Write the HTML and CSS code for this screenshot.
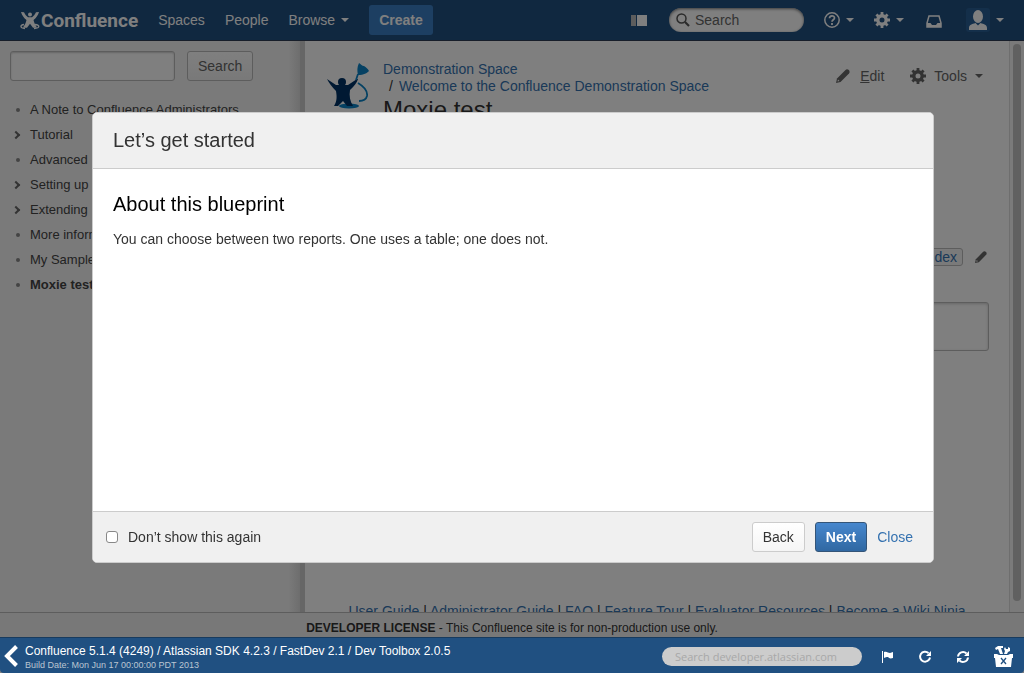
FILE: index.html
```
<!DOCTYPE html>
<html lang="en">
<head>
  <meta charset="UTF-8">
  <meta name="viewport" content="width=device-width, initial-scale=1">
  <title>Moxie test - Confluence</title>
  <link rel="stylesheet" href="styles.css">
</head>
<body>
  <div class="page">
    <header class="header">
      <a class="logo" href="#">
        <svg width="20" height="20" viewBox="0 0 20 20" fill="#fff">
          <circle cx="10" cy="4.500" r="2"/>
          <path d="M1 2l3 .3c1 2 2.500 4 4 5h4c1.500-1 3-3 4-5l3-.3c-1 3.500-3 6-5.500 8 .5 3 2 5 3.500 7.700h-4l-3-4-3 4H3c1.500-2.700 3-4.700 3.500-7.700C4 8 2 5.500 1 2z"/>
          <path d="M4 14.500c-4 .5-4.500 3.500 1 4M15 14.500c5 .5 5.500 3.500-1 4" fill="none" stroke="#fff" stroke-width="1.300"/>
        </svg>
        <span>Confluence</span>
      </a>
      <nav class="nav">
        <a href="#">Spaces</a>
        <a href="#">People</a>
        <a href="#" class="drop">Browse</a>
      </nav>
      <button class="create">Create</button>
      <div class="header-right">
        <a href="#" class="icon sidebar-icon" aria-label="Sidebar">
          <svg width="16" height="11" viewBox="0 0 16 11"><path d="M0 0h5v11H0z" fill="#bbb"/><path d="M6 0h10v11H6z" fill="#fff"/></svg>
        </a>
        <div class="quick-search">
          <svg width="14" height="14" viewBox="0 0 14 14" fill="none" stroke="#555"><circle cx="5.500" cy="5.500" r="4.500" stroke-width="1.500"/><path d="M9 9l4 4" stroke-width="2.200"/></svg>
          <input type="text" placeholder="Search" aria-label="Quick search">
        </div>
        <a href="#" class="icon drop help" aria-label="Help">
          <svg width="16" height="16" viewBox="0 0 16 16" fill="none" stroke="#fff"><circle cx="8" cy="8" r="7.200" stroke-width="1.500"/><path d="M5.500 6.300C5.500 3 10.500 3 10.500 6c0 1.800-2.500 1.800-2.500 3.800" stroke-width="1.700"/><path d="M8 11v2" stroke-width="1.800"/></svg>
        </a>
        <a href="#" class="icon drop admin" aria-label="Administration">
          <svg width="16" height="16" viewBox="0 0 16 16" fill="none" stroke="#fff"><circle cx="8" cy="8" r="4.200" stroke-width="3.400"/><path d="M8 0v4M8 12v4M0 8h4M12 8h4M2.400 2.400l2.600 2.600M11 11l2.600 2.600M2.400 13.600L5 11M11 5l2.600-2.600" stroke-width="2.800"/></svg>
        </a>
        <a href="#" class="icon tray" aria-label="Workbox">
          <svg width="16" height="13" viewBox="0 0 16 13"><path d="M3 1h10l2 7v4H1V8z" fill="none" stroke="#fff" stroke-width="1.500"/><path d="M1 8h3.500l1.500 2h4l1.500-2H15v4H1z" fill="#fff"/></svg>
        </a>
        <a href="#" class="icon drop user" aria-label="User">
          <svg width="24" height="24" viewBox="0 0 24 24"><rect width="24" height="24" rx="3" fill="#285f95"/><ellipse cx="12" cy="8.500" rx="5" ry="6.500" fill="#fff"/><path d="M3 22v-2c0-3 3-4 6.500-5l2.500 2.500 2.500-2.500c3.500 1 6.500 2 6.500 5v2z" fill="#fff"/></svg>
        </a>
      </div>
    </header>

    <div class="main">
      <aside class="sidebar">
        <form class="side-search">
          <input type="text" aria-label="Search this space">
          <button type="button">Search</button>
        </form>
        <ul class="tree">
          <li>A Note to Confluence Administrators</li>
          <li class="closed">Tutorial</li>
          <li>Advanced</li>
          <li class="closed">Setting up</li>
          <li class="closed">Extending</li>
          <li>More information</li>
          <li>My Sample</li>
          <li class="current">Moxie test</li>
        </ul>
      </aside>
      <div class="splitter"></div>
      <div class="content">
        <div class="title-row">
          <svg class="space-logo" width="42" height="48" viewBox="0 0 42 48">
            <ellipse cx="22" cy="43" rx="10" ry="2.500" fill="#0a83c6"/>
            <circle cx="15" cy="19" r="4" fill="#003366"/>
            <path d="M0 16l9 6h12l9-6h1c-1 4-4 7-8 11-1 6 0 11 3 16h-6l-4-5-5 5H7c3-5 3-9 2-15C5 24 2 20 0 16z" fill="#003366"/>
            <path d="M32 0c2 1 3 3 5 3 2 1 4 3 5 5-2 2-5 4-11 4-1-4-1-8 1-12z" fill="#0a83c6"/>
            <path d="M31 11l-2 6M31 20c5 3 10 7 9 13-1 4-4 5-8 5" fill="none" stroke="#0a83c6" stroke-width="1.800"/>
          </svg>
          <div class="title-text">
            <ul class="crumbs">
              <li><a href="#">Demonstration Space</a></li>
              <li class="sub"><a href="#">Welcome to the Confluence Demonstration Space</a></li>
            </ul>
            <h1>Moxie test</h1>
          </div>
          <div class="actions">
            <a href="#">
              <svg class="pencil" width="14" height="14" viewBox="0 0 14 14" fill="#666"><path d="M0 14l1-4.500L9.500 1c2-2 5.500 1 3.500 3.500L4.500 13z"/><path d="M1.500 12.500l.5-2 1.500 1.500z" fill="#fff"/></svg>
              <span><u>E</u>dit</span>
            </a>
            <a href="#" class="drop">
              <svg width="16" height="16" viewBox="0 0 16 16" fill="none" stroke="#666"><circle cx="8" cy="8" r="4.200" stroke-width="3.400"/><path d="M8 0v4M8 12v4M0 8h4M12 8h4M2.400 2.400l2.600 2.600M11 11l2.600 2.600M2.400 13.600L5 11M11 5l2.600-2.600" stroke-width="2.800"/></svg>
              <span>Tools</span>
            </a>
          </div>
        </div>
        <div class="labels">
          <a href="#" class="label">index</a>
          <a href="#" class="edit-labels" aria-label="Edit labels">
            <svg width="12" height="12" viewBox="0 0 14 14" fill="#666"><path d="M0 14l1-4.500L9.500 1c2-2 5.500 1 3.500 3.500L4.500 13z"/><path d="M1.500 12.500l.5-2 1.500 1.500z" fill="#fff"/></svg>
          </a>
        </div>
        <textarea class="comment" aria-label="Write a comment"></textarea>
        <div class="footer-links">
          <a href="#">User Guide</a> | <a href="#">Administrator Guide</a> | <a href="#">FAQ</a> | <a href="#">Feature Tour</a> | <a href="#">Evaluator Resources</a> | <a href="#">Become a Wiki Ninja</a>
        </div>
      </div>
      <div class="scrollbar"><div class="thumb"></div></div>
    </div>

    <div class="license"><strong>DEVELOPER LICENSE</strong> - This Confluence site is for non-production use only.</div>
    <div class="blanket"></div>
  </div>

  <div class="toolbar">
    <button class="collapse" aria-label="Collapse">
      <svg width="14" height="22" viewBox="0 0 14 22" fill="none" stroke="#fff" stroke-width="4"><path d="M12.500 1.500L3 11l9.500 9.500"/></svg>
    </button>
    <div class="versions">
      <div class="version">Confluence 5.1.4 (4249) / Atlassian SDK 4.2.3 / FastDev 2.1 / Dev Toolbox 2.0.5</div>
      <div class="build">Build Date: Mon Jun 17 00:00:00 PDT 2013</div>
    </div>
    <div class="tools">
      <input class="dev-search" type="text" placeholder="Search developer.atlassian.com" aria-label="Search developer.atlassian.com">
      <button aria-label="Flag"><svg width="12" height="12" viewBox="0 0 12 12" fill="#fff"><path d="M0 0h1v12H0zM2 1c3-1 4 1 6 1l3-1v6c-3 1-4 0-5-1-2 0-2 0-4 1z"/></svg></button>
      <button aria-label="Reload"><svg width="14" height="14" viewBox="0 0 14 14"><path d="M10.500 3A5 5 0 1 0 12 7.500" fill="none" stroke="#fff" stroke-width="2"/><path d="M13 1v5H8z" fill="#fff"/></svg></button>
      <button aria-label="Live reload"><svg width="14" height="14" viewBox="0 0 14 14"><path d="M2 6.500a5 5 0 0 1 8.500-3M12 7.500a5 5 0 0 1-8.500 3" fill="none" stroke="#fff" stroke-width="2"/><path d="M13 1v5H8zM1 13V8h5z" fill="#fff"/></svg></button>
      <button class="toolbox" aria-label="Toolbox"><svg width="19" height="21" viewBox="0 0 19 21"><path d="M1 2l3-2h5v2H7l2 6H6L4 3 2 4zM11 1l1 2h2V1l2 1v3l-2 1-1 2h-3l1-3-1-2z" fill="#fff"/><path d="M0 8h3l2 1h9l2-1h3v4h-1l-1 9H2l-1-9H0z" fill="#fff"/><path d="M7 12l5 6M12 12l-5 6" stroke="#205081" stroke-width="1.300"/></svg></button>
    </div>
  </div>

  <div class="dialog-wrap">
    <section class="dialog" role="dialog" aria-labelledby="dialog-title">
      <h2 id="dialog-title" class="dialog-header">Let’s get started</h2>
      <div class="dialog-body">
        <h3>About this blueprint</h3>
        <p>You can choose between two reports. One uses a table; one does not.</p>
      </div>
      <div class="dialog-footer">
        <input type="checkbox" id="dont-show">
        <label for="dont-show">Don’t show this again</label>
        <div class="dialog-buttons">
          <button class="back">Back</button>
          <button class="next">Next</button>
          <a href="#">Close</a>
        </div>
      </div>
    </section>
  </div>
</body>
</html>
```
FILE: styles.css
```
*, *::before {
  box-sizing: border-box;
}
body {
  margin: 0;
  height: 100vh;
  display: flex;
  flex-direction: column;
  background: #808080;
  color: #333;
  font-family: "Liberation Sans", Arial, sans-serif;
  font-size: 14px;
}
a {
  color: #3572b0;
  text-decoration: none;
}
button, input, textarea {
  font-family: inherit;
  font-size: 14px;
}
svg {
  display: block;
  flex: none;
}
.page {
  position: relative;
  flex: 1;
  min-height: 0;
  display: flex;
  flex-direction: column;
}
.blanket {
  position: absolute;
  inset: 0;
  background: rgba(0, 0, 0, 0.5);
}
.drop::after {
  content: "";
  border: 4px solid transparent;
  border-top-color: currentColor;
  border-bottom: none;
}

/* header */
.header {
  height: 41px;
  flex: none;
  display: flex;
  align-items: center;
  padding: 0 20px;
  background: #205081;
  border-bottom: 1px solid #2e3d54;
}
.header a {
  color: #fff;
}
.logo {
  display: flex;
  align-items: center;
  gap: 1px;
  font-family: Roboto, sans-serif;
  font-size: 19px;
  font-weight: bold;
}
.nav {
  display: flex;
  gap: 20px;
  margin-left: 20px;
}
.nav a, .icon {
  display: flex;
  align-items: center;
  gap: 6px;
}
.create {
  height: 30px;
  margin-left: 20px;
  padding: 0 10px;
  border: none;
  border-radius: 3px;
  background: #3b7fc4;
  color: #fff;
  font-weight: bold;
}
.header-right {
  display: flex;
  align-items: center;
  gap: 20px;
  margin-left: auto;
}
.quick-search {
  display: flex;
  align-items: center;
  gap: 5px;
  width: 135px;
  height: 24px;
  padding: 0 7px;
  border-radius: 12px;
  background: #fff;
  box-shadow: inset 0 1px 3px #777;
}
.quick-search input {
  width: 90px;
  padding: 0;
  border: none;
  background: none;
}
.quick-search input::placeholder {
  color: #666;
}
.sidebar-icon {
  margin-right: 2px;
}
.tray {
  padding: 2px 0 0 2px;
}
.user {
  margin-left: 4px;
}

/* page columns */
.main {
  flex: 1;
  min-height: 0;
  display: flex;
  background: #fff;
}
.sidebar {
  width: 300px;
  flex: none;
  padding: 10px;
  overflow: hidden;
  background: linear-gradient(to right, #f5f5f5 288px, #dcdcdc);
}
.splitter {
  width: 5px;
  flex: none;
  background: #ccc;
}
.side-search {
  display: flex;
  gap: 12px;
}
.side-search input {
  width: 165px;
  height: 30px;
  border: 1px solid #bbb;
  border-radius: 3px;
  box-shadow: inset 0 1px 2px #ccc;
}
.side-search button {
  height: 30px;
  padding: 0 10px;
  border: 1px solid #bbb;
  border-radius: 3px;
  background: linear-gradient(#fff, #f2f2f2);
  color: #666;
}
.tree {
  margin: 16px 0 0;
  padding: 0;
  list-style: none;
  color: #444;
  font-size: 13px;
  line-height: 25px;
  white-space: nowrap;
}
.tree li {
  display: flex;
  align-items: center;
}
.tree li::before {
  content: "";
  width: 4px;
  height: 4px;
  margin: 0 10px 0 6px;
  border-radius: 50%;
  background: #888;
}
.tree .closed::before {
  width: 6px;
  height: 6px;
  margin: 0 11px 0 3px;
  border: solid #666;
  border-width: 2px 2px 0 0;
  border-radius: 0;
  background: none;
  transform: rotate(45deg);
}
.tree .current {
  font-weight: bold;
}

/* page content */
.content {
  flex: 1;
  min-width: 0;
  padding: 20px 20px 0 22px;
  overflow: hidden;
}
.title-row {
  display: flex;
}
.space-logo {
  margin: 2px 14px 0 0;
}
.title-text {
  flex: 1;
}
.crumbs {
  margin: 0;
  padding: 0;
  list-style: none;
  line-height: 17px;
}
.crumbs .sub::before {
  content: "/";
  padding: 0 6px;
}
h1 {
  margin: 0;
  font-size: 24px;
  font-weight: normal;
  line-height: 30px;
}
.actions {
  display: flex;
  gap: 26px;
  height: 30px;
  padding-right: 6px;
}
.actions a {
  display: flex;
  align-items: center;
  gap: 8px;
  color: #666;
}
.actions .pencil {
  margin-right: 2px;
}
.labels {
  display: flex;
  justify-content: flex-end;
  align-items: center;
  gap: 12px;
  margin-top: 123px;
}
.label {
  padding: 0 5px;
  border: 1px solid #bbb;
  border-radius: 3px;
  background: #f5f5f5;
  line-height: 16px;
}
.edit-labels {
  margin-right: 2px;
}
.comment {
  display: block;
  width: 100%;
  height: 49px;
  margin-top: 36px;
  border: 1px solid #bbb;
  border-radius: 3px;
  box-shadow: inset 0 1px 3px #ccc;
  resize: none;
}
.footer-links {
  margin: 250px -20px 0 -22px;
  line-height: 20px;
  text-align: center;
  white-space: nowrap;
}
.scrollbar {
  width: 15px;
  flex: none;
  padding: 3px 3px 11px;
  background: #f4f4f4;
  border-left: 1px solid #ddd;
}
.thumb {
  width: 8px;
  height: 100%;
  border-radius: 4px;
  background: #c0c0c0;
}
.license {
  height: 25px;
  flex: none;
  padding-top: 1px;
  border-top: 1px solid #bbb;
  background: #f0f0f0;
  font-size: 12px;
  line-height: 28px;
  text-align: center;
  overflow: hidden;
}

/* developer toolbar */
.toolbar {
  height: 36px;
  flex: none;
  display: flex;
  align-items: center;
  padding: 2px 11px 0 4px;
  border-top: 1px solid #183b5e;
  border-radius: 0 0 4px 4px;
  background: #205081;
  color: #fff;
}
.toolbar button {
  padding: 0;
  border: none;
  background: none;
}
.toolbar .collapse {
  padding-bottom: 2px;
}
.versions {
  margin-left: 7px;
  padding-top: 2px;
}
.version {
  font-size: 12px;
  line-height: 16px;
}
.build {
  font-size: 9px;
  line-height: 13px;
  color: #bbc6d2;
}
.tools {
  display: flex;
  align-items: center;
  gap: 24px;
  margin-left: auto;
}
.dev-search {
  width: 200px;
  height: 19px;
  margin-right: -4px;
  padding: 0 13px;
  border: none;
  border-radius: 10px;
  background: #ccc;
  font-family: "Open Sans", sans-serif;
  font-size: 11px;
}
.dev-search::placeholder {
  color: #a8a8a8;
}

/* dialog */
.dialog-wrap {
  position: fixed;
  inset: 0;
  display: flex;
  align-items: center;
  justify-content: center;
  padding: 2px 0 0 2px;
}
.dialog {
  width: 842px;
  max-width: 100%;
  border: 1px solid #ccc;
  border-radius: 5px;
  background: #fff;
  overflow: hidden;
}
.dialog-header {
  margin: 0;
  padding: 0 20px;
  background: #f0f0f0;
  border-bottom: 1px solid #ccc;
  font-size: 20px;
  font-weight: normal;
  line-height: 55px;
}
.dialog-body {
  min-height: 342px;
  padding: 20px;
}
.dialog-body h3 {
  margin: 0;
  color: #000;
  font-size: 20px;
  font-weight: normal;
  line-height: 30px;
}
.dialog-body p {
  margin: 10px 0;
  line-height: 20px;
}
.dialog-footer {
  display: flex;
  align-items: center;
  height: 51px;
  padding: 0 20px 0 13px;
  background: #f0f0f0;
  border-top: 1px solid #ccc;
}
.dialog-footer input {
  width: 12px;
  height: 12px;
  margin: 0 10px 0 0;
  appearance: none;
  border: 1px solid #888;
  border-radius: 3px;
  background: #fff;
}
.dialog-footer input:checked {
  background: #3572b0;
}
.dialog-buttons {
  display: flex;
  align-items: center;
  gap: 10px;
  margin-left: auto;
}
.dialog-buttons button {
  height: 30px;
  padding: 0 10px;
  border: 1px solid #ccc;
  border-radius: 3px;
}
.dialog-buttons .back {
  background: linear-gradient(#fff, #f5f5f5);
  color: #333;
}
.dialog-buttons .next {
  background: linear-gradient(#4687ce, #3068a2);
  border-color: #345578;
  color: #fff;
  font-weight: bold;
}
```
